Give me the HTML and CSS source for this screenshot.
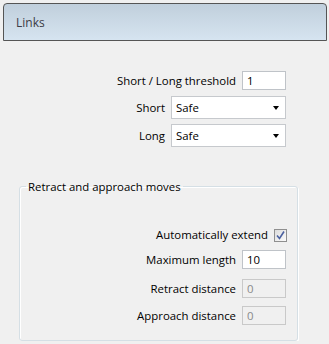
FILE: index.html
```html
<!DOCTYPE html>
<html lang="en">
<head>
  <meta charset="UTF-8" />
  <title>Links</title>
  <link rel="stylesheet" href="styles.css">
</head>
<body>
  <div class="header">Links</div>

  <div class="settings">
    <div class="row row-threshold">
      <label>Short / Long threshold</label>
      <input class="num" value="1" />
    </div>
    <div class="row row-combo">
      <label>Short</label>
      <div class="combo"><span>Safe</span><i class="arrow"></i></div>
    </div>
    <div class="row row-combo">
      <label>Long</label>
      <div class="combo"><span>Safe</span><i class="arrow"></i></div>
    </div>
  </div>

  <fieldset class="group">
    <legend>Retract and approach moves</legend>
    <div class="row row-check">
      <label>Automatically extend</label>
      <span class="check">
        <svg width="11" height="11" viewBox="0 0 11 11"><path d="M2 5.5 L4.5 8.5 L9 1.5" fill="none" stroke="#4b61a0" stroke-width="1.6"/></svg>
      </span>
    </div>
    <div class="row row-max">
      <label>Maximum length</label>
      <input class="num" value="10" />
    </div>
    <div class="row row-retract">
      <label>Retract distance</label>
      <input class="num" value="0" disabled />
    </div>
    <div class="row row-approach">
      <label>Approach distance</label>
      <input class="num" value="0" disabled />
    </div>
  </fieldset>
</body>
</html>
```

FILE: styles.css
```css
body { margin: 0; background: #f0f0f0; font-family: "Open Sans", "Noto Sans", sans-serif; font-size: 11.4px; color: #000; }

.header {
  margin: 3px 2px 0 3px; height: 36px; padding-left: 12px;
  display: flex; align-items: center;
  border: 1px solid #555; border-radius: 4px 4px 0 0;
  background: linear-gradient(#c0cfdc, #d6e4f0);
  color: #3c3c46; font-size: 12px;
}

.settings { padding: 30px 43px 0 0; }

.row { display: flex; justify-content: flex-end; align-items: center; gap: 6px; }
.row label { line-height: 16px; }
.row-combo { margin-top: 6px; }
.row-combo + .row-combo { margin-top: 5px; }

.num {
  box-sizing: border-box; width: 44px; height: 19px; margin: 0;
  padding: 0 4px; border: 1px solid #bfc3c8; background: #fff;
  font: inherit; color: #000; outline: none;
}
.num:disabled { background: #f0f0f0; border-color: #c9c9c9; color: #8a8a8a; }

.combo {
  box-sizing: border-box; width: 115px; height: 23px;
  padding: 0 4px; display: flex; align-items: center; justify-content: space-between;
  border: 1px solid #c6c9cd; background: #fff;
}
.arrow { width: 0; height: 0; margin-right: 2px; border-left: 3.5px solid transparent; border-right: 3.5px solid transparent; border-top: 4px solid #000; }

.group {
  margin: 32px 31px 0 19px; padding: 33px 11px 15px 6px;
  border: 1px solid #d5dfe5; border-radius: 3px;
  box-shadow: inset 1px 1px 0 #fff, 1px 1px 0 #fff;
}
.group legend { padding: 0 2px; }
.group .row-max { margin-top: 7px; }
.group .row-retract { margin-top: 10px; }
.group .row-approach { margin-top: 8px; }

.check {
  box-sizing: border-box; width: 13px; height: 13px; margin-right: -1px;
  display: flex; align-items: center; justify-content: center;
  border: 1px solid #8f8f8f; background: linear-gradient(135deg, #dcdcdc, #fbfbfb);
}
```
